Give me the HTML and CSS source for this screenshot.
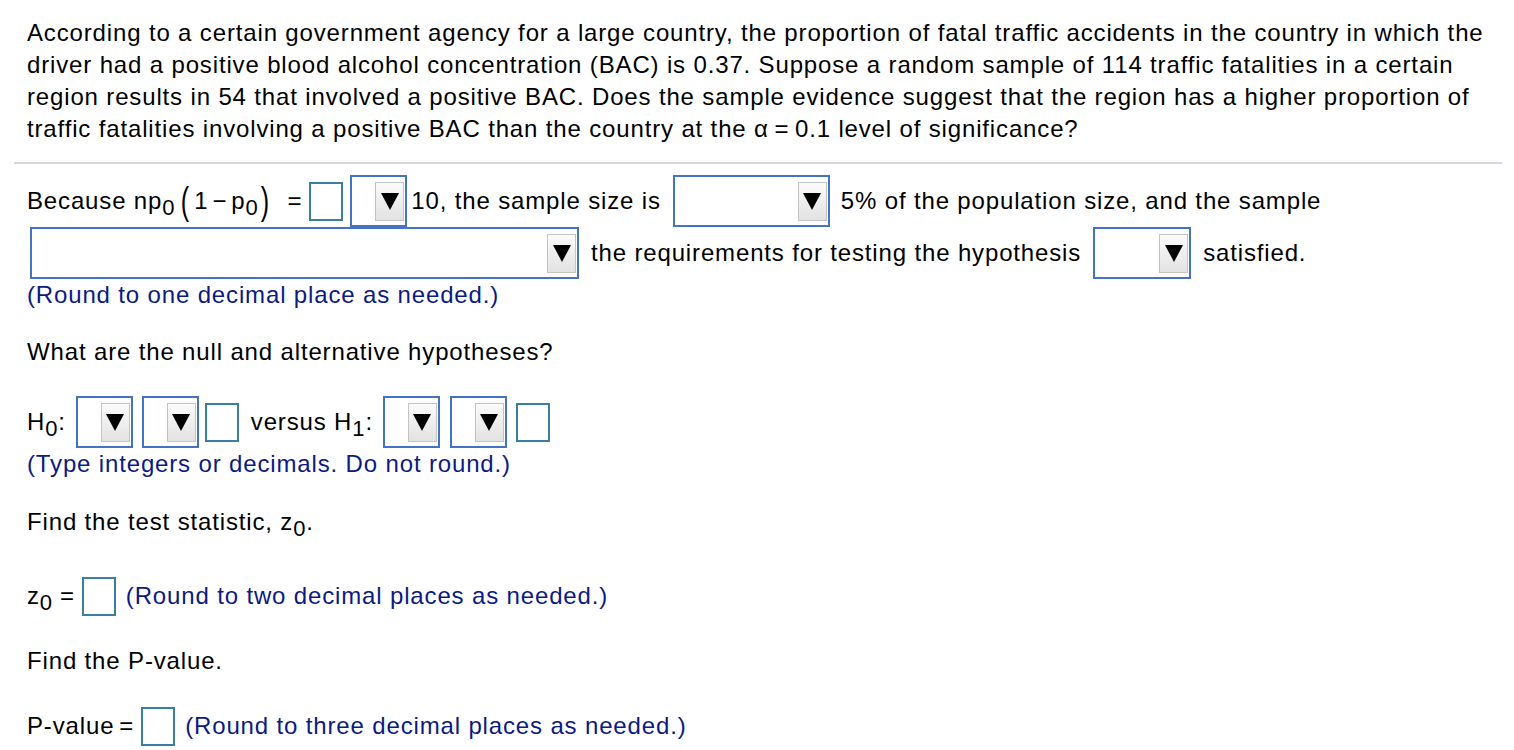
FILE: index.html
```html
<!DOCTYPE html>
<html>
<head>
<meta charset="utf-8">
<link rel="stylesheet" href="styles.css">
</head>
<body>
<div class="page">
  <p class="question">According to a certain government agency for a large country, the proportion of fatal traffic accidents in the country in which the driver had a positive blood alcohol concentration (BAC) is 0.37. Suppose a random sample of 114 traffic fatalities in a certain region results in 54 that involved a positive BAC. Does the sample evidence suggest that the region has a higher proportion of traffic fatalities involving a positive BAC than the country at the α&thinsp;=&thinsp;0.1 level of significance?</p>
  <hr class="divider">
  <div class="answer">
    <div class="row row1">
      <span>Because np<sub>0</sub></span>
      <span class="paren lp">(</span><span>1</span><span class="minus">−</span><span>p<sub>0</sub></span><span class="paren rp">)</span>
      <span class="eqsign">=</span>
      <span class="tb"></span>
      <span class="dd w57 m-l7"><span class="btn"><span class="tri"></span></span></span>
      <span class="m-l4">10, the sample size is</span>
      <span class="dd w157 m-l12"><span class="btn"><span class="tri"></span></span></span>
      <span class="m-l11">5% of the population size, and the sample</span>
    </div>
    <div class="row row2">
      <span class="dd w549 m-l3"><span class="btn"><span class="tri"></span></span></span>
      <span class="m-l12">the requirements for testing the hypothesis</span>
      <span class="dd w98 m-l12"><span class="btn"><span class="tri"></span></span></span>
      <span class="m-l12">satisfied.</span>
    </div>
    <p class="note">(Round to one decimal place as needed.)</p>

    <p class="prompt p-hyp">What are the null and alternative hypotheses?</p>

    <div class="row hrow">
      <span>H<sub>0</sub>:</span>
      <span class="dd w57 m-l10"><span class="btn"><span class="tri"></span></span></span>
      <span class="dd w57 m-l9"><span class="btn"><span class="tri"></span></span></span>
      <span class="tb m-l6"></span>
      <span class="m-l12">versus H<sub>1</sub>:</span>
      <span class="dd w57 m-l10"><span class="btn"><span class="tri"></span></span></span>
      <span class="dd w57 m-l10"><span class="btn"><span class="tri"></span></span></span>
      <span class="tb m-l9"></span>
    </div>
    <p class="note">(Type integers or decimals. Do not round.)</p>

    <p class="prompt p-stat">Find the test statistic, z<sub>0</sub>.</p>

    <div class="row zrow">
      <span>z<sub>0</sub></span>
      <span class="eqsign2">=</span>
      <span class="tb m-l7"></span>
      <span class="note inline">(Round to two decimal places as needed.)</span>
    </div>

    <p class="prompt p-pval">Find the P-value.</p>

    <div class="row prow">
      <span>P-value</span>
      <span class="eqsign3">=</span>
      <span class="tb m-l7"></span>
      <span class="note inline">(Round to three decimal places as needed.)</span>
    </div>
  </div>
</div>
</body>
</html>
```
FILE: styles.css
```css
html, body {
  margin: 0;
  padding: 0;
  background: #fff;
}
body {
  font-family: "Liberation Sans", Arial, sans-serif;
  font-size: 24px;
  letter-spacing: 0.85px;
  color: #000;
}
.page {
  padding-top: 17px;
}
.question {
  margin: 0 0 0 27px;
  width: 1474px;
  line-height: 32px;
}
.divider {
  margin: 17px 12px 0 14px;
  border: 0;
  height: 2px;
  background: #d4d6e2;
}
.answer {
  padding-left: 27px;
  padding-top: 11px;
}
.row {
  display: flex;
  align-items: center;
  white-space: nowrap;
}
sub {
  font-size: 22px;
  vertical-align: -6px;
  line-height: 0;
}
.row1 {
  height: 52px;
}
.row2 {
  height: 52px;
}
.paren {
  display: inline-block;
  transform: scale(1.05, 1.6);
  font-weight: 300;
}
.lp { margin-left: 6px; margin-right: 4px; }
.rp { margin-left: 2px; }
.minus {
  margin: 0 4px;
}
.eqsign {
  margin-left: 18px;
  margin-right: 7px;
}
.eqsign2 {
  margin-left: 7px;
}
.eqsign3 {
  margin-left: 5px;
}
.tb {
  display: inline-block;
  width: 34px;
  height: 39px;
  box-sizing: border-box;
  border: 2px solid #3a7fa0;
  background: #fff;
  flex: none;
}
.dd {
  display: inline-flex;
  justify-content: flex-end;
  align-items: center;
  height: 52px;
  box-sizing: border-box;
  border: 2px solid #4472c4;
  padding-right: 1px;
  background: #fff;
  flex: none;
}
.w57 { width: 57px; }
.w98 { width: 98px; }
.w157 { width: 157px; }
.w549 { width: 549px; }
.btn {
  width: 29px;
  height: 39px;
  box-sizing: border-box;
  border: 1px solid #c4c4c4;
  background: linear-gradient(#fbfbfb, #e2e2e2);
  display: flex;
  align-items: center;
  justify-content: center;
}
.tri {
  width: 0;
  height: 0;
  border-left: 9px solid transparent;
  border-right: 9px solid transparent;
  border-top: 17px solid #000;
}
.note {
  color: #0c1a84;
  margin: 0;
  line-height: 32px;
}
.note.inline {
  line-height: normal;
  margin-left: 10px;
}
.m-l3 { margin-left: 3px; }
.m-l4 { margin-left: 4px; }
.m-l6 { margin-left: 6px; }
.m-l7 { margin-left: 7px; }
.m-l9 { margin-left: 9px; }
.m-l10 { margin-left: 10px; }
.m-l11 { margin-left: 11px; }
.m-l12 { margin-left: 12px; }
.prompt {
  margin: 0;
  line-height: 32px;
}
.p-hyp { margin-top: 25px; }
.hrow {
  margin-top: 28px;
  height: 52px;
}
.p-stat { margin-top: 26px; }
.zrow {
  margin-top: 38px;
  height: 40px;
}
.p-pval { margin-top: 29px; }
.prow {
  margin-top: 29px;
  height: 40px;
}
```
